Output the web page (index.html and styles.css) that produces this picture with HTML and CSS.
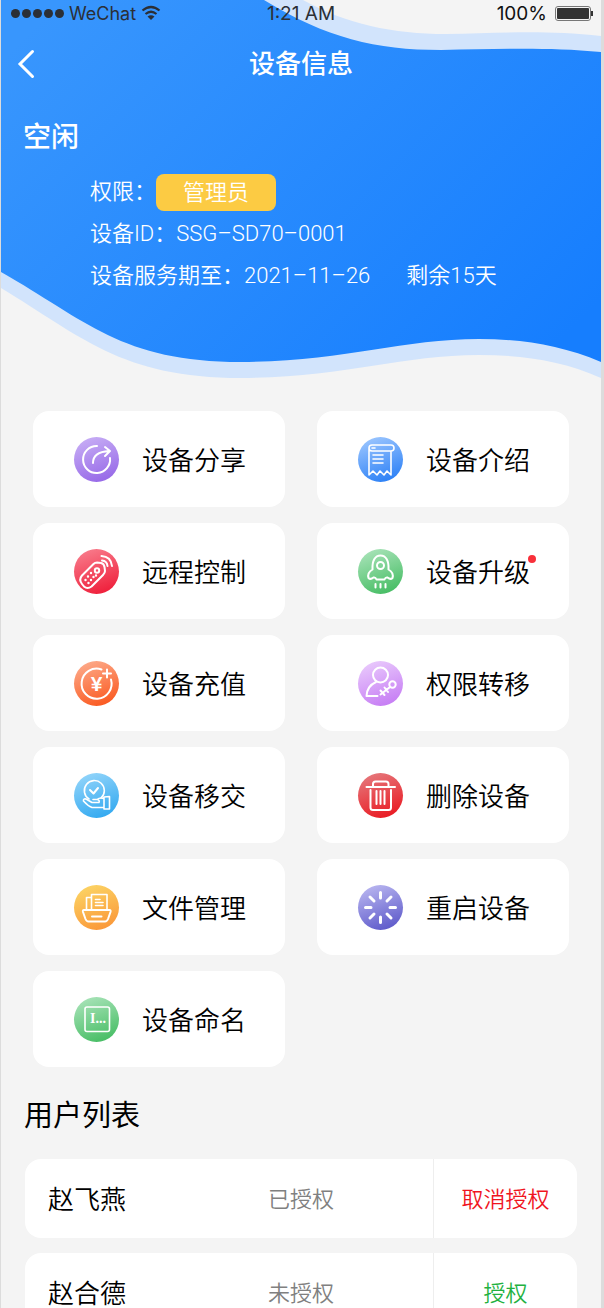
FILE: index.html
```html
<!DOCTYPE html>
<html lang="zh-CN">
<head>
  <meta charset="UTF-8">
  <meta name="viewport" content="width=device-width, initial-scale=1.0">
  <title>设备信息</title>
  <link rel="stylesheet" href="styles.css">
</head>
<body>
  <div class="page">

    <!-- Header with wave background -->
    <header class="hero">
      <svg class="waves" viewBox="0 0 600 380" preserveAspectRatio="none" aria-hidden="true">
        <defs>
          <linearGradient id="sky" gradientUnits="userSpaceOnUse" x1="60" y1="0" x2="480" y2="420">
            <stop offset="0" stop-color="#3896fd"/>
            <stop offset="1" stop-color="#167efe"/>
          </linearGradient>
        </defs>
        <path fill="#d2e4fc" d="M0 0H302C345 24 392 34 445 34C500 33 545 30 600 36V378C560 360 520 355 478 355C400 355 340 378 240 378C120 378 80 336 0 288Z"/>
        <path fill="url(#sky)" d="M0 0H263C325 38 375 50 440 50C500 49 545 47 600 52V362C560 345 520 339 478 339C400 339 340 362 240 362C120 362 85 320 0 272Z"/>
      </svg>

      <div class="status-bar">
        <div class="carrier">
          <span class="signal"><i></i><i></i><i></i><i></i><i></i></span>
          <span>WeChat</span>
          <svg class="wifi" viewBox="0 0 20 16" aria-hidden="true">
            <path d="M1.500 5.500Q10 -1.500 18.500 5.500M4.500 9Q10 4.500 15.500 9" fill="none" stroke="#2b2f36" stroke-width="2.200"/>
            <path d="M6.500 11.500Q10 9 13.500 11.500L10 15Z" fill="#2b2f36"/>
          </svg>
        </div>
        <span class="clock">1:21 AM</span>
        <div class="power">
          <span>100%</span>
          <span class="battery"></span>
        </div>
      </div>

      <nav class="title-bar">
        <button class="back" type="button" aria-label="返回">
          <svg viewBox="0 0 18 30" aria-hidden="true"><path d="M15.500 2.500L3 15L15.500 27.500" fill="none" stroke="#fff" stroke-width="3" stroke-linecap="round"/></svg>
        </button>
        <h1>设备信息</h1>
      </nav>

      <h2 class="state">空闲</h2>
      <div class="info">
        <p>权限：<span class="role">管理员</span></p>
        <p>设备ID：SSG–SD70–0001</p>
        <p>设备服务期至：2021–11–26 <span class="remain">剩余15天</span></p>
      </div>
    </header>

    <!-- Device actions -->
    <main>
      <div class="menu">
        <button class="card" type="button">
          <span class="icon share"><svg viewBox="0 0 45 45">
            <path d="M23 9A13.500 13.500 0 1 0 36 21M19 26Q19 15 35 14M31 10L36 14L31 19"/>
          </svg></span>
          <span class="label">设备分享</span>
        </button>
        <button class="card" type="button">
          <span class="icon intro"><svg viewBox="0 0 45 45">
            <path class="thin" d="M14 8H33Q36 8 36 11T33 14H14Q11 14 11 11T14 8M11 11V38L15 34L19 38L22 34L26 38L29 34L33 38V14M14 11H17M15 18H25M15 22H25M15 26H25"/>
          </svg></span>
          <span class="label">设备介绍</span>
        </button>
        <button class="card" type="button">
          <span class="icon remote"><svg viewBox="0 0 45 45">
            <path d="M8 26.500L19.500 15Q21 13.500 23 13.500L27 14Q30 14.500 30.500 18L31 22Q31 24 29 26L17.500 37.500Q13.500 40.500 10 37.500L8 35Q4.500 30.500 8 26.500ZM28 11.500Q33 12 33.500 17M27.500 7Q37 7.500 38 17"/>
            <circle cx="23" cy="21.500" r="2.200"/>
            <path class="dots" d="M17 24h0M14 27.500h0M19.500 28h0M17 31h0M11.500 31h0M22 26.500h0M14.500 34h0"/>
          </svg></span>
          <span class="label">远程控制</span>
        </button>
        <button class="card" type="button">
          <span class="icon upgrade"><svg viewBox="0 0 45 45">
            <path d="M22.500 6.500C17 6.500 14 12 14.500 20.500C11 22.500 9.500 25.500 10.500 29Q12.500 31 15.500 28.500Q17.500 28 18.500 30.500H26.500Q27.500 28 29.500 28.500Q32.500 31 34.500 29C35.500 25.500 34 22.500 30.500 20.500C31 12 28 6.500 22.500 6.500ZM17.500 35V38.500M22.500 35V38.500M27.500 35V38.500"/>
            <circle cx="22.500" cy="16.500" r="3.500"/>
          </svg></span>
          <span class="label">设备升级<i class="dot"></i></span>
        </button>
        <button class="card" type="button">
          <span class="icon recharge"><svg viewBox="0 0 45 45">
            <path d="M27.500 8.500A15 15 0 1 0 37 18.500M33 8.500V16.500M29 12.500H37"/>
            <text class="yen" x="22.500" y="30" text-anchor="middle">¥</text>
          </svg></span>
          <span class="label">设备充值</span>
        </button>
        <button class="card" type="button">
          <span class="icon transfer"><svg viewBox="0 0 45 45">
            <circle cx="22.500" cy="14" r="7.500"/>
            <path d="M18 21Q9 25 8.500 35H19.500M32 26L22.500 33.500M22.500 29.500L26.500 34M26.500 26.500L30 31"/>
            <circle cx="34.500" cy="23.500" r="3.200"/>
          </svg></span>
          <span class="label">权限转移</span>
        </button>
        <button class="card" type="button">
          <span class="icon handover"><svg viewBox="0 0 45 45">
            <path class="thin" d="M15 26A10 10 0 1 1 27 25"/>
            <path d="M16 17L19.500 20.500L24 15"/>
            <path class="thin" d="M30 34.500H18Q14 33 9.500 28Q9 25.500 12 26L18 29.500H25Q26 27 23 26.500H19M23 26.500Q26 24 30 25.500M30 24L35.500 23.500V36H30Z"/>
          </svg></span>
          <span class="label">设备移交</span>
        </button>
        <button class="card" type="button">
          <span class="icon delete"><svg viewBox="0 0 45 45">
            <path d="M8.500 14H37M15 13.500V11Q15 8.500 17.500 8.500H28Q30.500 8.500 30.500 11V13.500M12.500 17V34.500Q12.500 37 15 37H30.500Q33 37 33 34.500V17M18.500 18V31M22.500 18V31M26.500 18V31"/>
          </svg></span>
          <span class="label">删除设备</span>
        </button>
        <button class="card" type="button">
          <span class="icon files"><svg viewBox="0 0 45 45">
            <path class="thin" d="M17.500 24V9.500H33V24M17.500 12.500H12.500V24M21.500 14.500H26M21.500 17.500H29M21.500 20.500H29"/>
            <path d="M10 25H35.500Q37 25 36.500 27L34 34Q33 36.500 31 36.500H14.500Q12.500 36.500 11.500 34L9 27Q8.500 25 10 25ZM18 31.500H27.500"/>
          </svg></span>
          <span class="label">文件管理</span>
        </button>
        <button class="card" type="button">
          <span class="icon restart"><svg viewBox="0 0 45 45">
            <path class="spokes" d="M22.500 7.500V13M22.500 32V37.500M7.500 22.500H13M32 22.500H37.500M12 12L16 16M29 29L33 33M33 12L29 16M16 29L12 33"/>
          </svg></span>
          <span class="label">重启设备</span>
        </button>
        <button class="card" type="button">
          <span class="icon rename"><svg viewBox="0 0 45 45">
            <rect class="thin" x="11" y="10" width="24.500" height="24.500" rx="2"/>
            <text class="caret" x="16" y="26">I...</text>
          </svg></span>
          <span class="label">设备命名</span>
        </button>
      </div>

      <!-- User list -->
      <h2 class="list-title">用户列表</h2>
      <ul class="users">
        <li>
          <span class="name">赵飞燕</span>
          <span class="auth">已授权</span>
          <button class="revoke" type="button">取消授权</button>
        </li>
        <li>
          <span class="name">赵合德</span>
          <span class="auth">未授权</span>
          <button class="grant" type="button">授权</button>
        </li>
      </ul>
    </main>
  </div>
</body>
</html>
```
FILE: styles.css
```css
* {
  box-sizing: border-box;
}

body {
  margin: 0;
  background-color: #f4f4f4;
  font-family: Roboto, "Noto Sans CJK SC", sans-serif;
  font-weight: 350;
  color: #000;
}

h1, h2, p, ul {
  margin: 0;
  padding: 0;
}

button {
  border: none;
  background: none;
  padding: 0;
  font: inherit;
  color: inherit;
  cursor: pointer;
}

.page {
  height: 100vh;
  overflow: hidden;
  border-left: 1px solid #dcdcdc;
  border-right: 3px solid #dcdcdc;
}

/* Header */
.hero {
  position: relative;
  height: 380px;
  color: #fff;
}

.waves {
  position: absolute;
  inset: 0;
  z-index: -1;
  width: 100%;
  height: 100%;
}

.status-bar {
  display: grid;
  grid-template-columns: 1fr auto 1fr;
  align-items: center;
  height: 26px;
  padding: 0 10px;
  font-family: Inter, sans-serif;
  font-size: 19px;
  font-weight: 400;
  color: #2b2f36;
}

.carrier, .power {
  display: flex;
  align-items: center;
  gap: 5px;
}

.carrier {
  font-size: 18px;
}

.power {
  justify-content: flex-end;
  gap: 8px;
  color: #111;
}

.signal {
  display: flex;
  gap: 2px;
}

.signal i {
  width: 9px;
  height: 9px;
  border-radius: 50%;
  background-color: #2b2f36;
}

.wifi {
  width: 20px;
  height: 16px;
}

.battery {
  position: relative;
  width: 36px;
  height: 15px;
  padding: 1px;
  border: 1px solid #777;
  border-radius: 3px;
  background: #333 content-box;
}

.battery::after {
  content: "";
  position: absolute;
  right: -3px;
  top: 4px;
  width: 2px;
  height: 5px;
  background-color: #333;
}

.title-bar {
  display: grid;
  grid-template-columns: 1fr auto 1fr;
  align-items: center;
  height: 76px;
  padding: 0 16px;
}

.back {
  width: 18px;
  height: 30px;
}

.back svg {
  display: block;
  width: 18px;
  height: 30px;
}

.title-bar h1 {
  font-size: 26px;
  line-height: 36px;
  font-weight: 500;
}

.state {
  padding: 16px 22px 0;
  font-size: 28px;
  line-height: 40px;
  font-weight: 500;
}

.info {
  padding: 13px 0 0 89px;
  font-size: 22px;
  line-height: 42px;
}

.info p {
  display: flex;
  align-items: center;
  white-space: nowrap;
}

.role {
  width: 120px;
  border-radius: 8px;
  background-color: #fccb43;
  line-height: 37px;
  text-align: center;
}

.remain {
  margin-left: 36px;
}

/* Action cards */
.menu {
  display: grid;
  grid-template-columns: 1fr 1fr;
  gap: 16px 32px;
  padding: 31px 32px 0;
}

.card {
  display: flex;
  align-items: center;
  gap: 23px;
  height: 96px;
  padding-left: 41px;
  border-radius: 16px;
  background-color: #fff;
  font-size: 26px;
  line-height: 36px;
}

.label {
  position: relative;
  padding-top: 4px;
}

.dot {
  position: absolute;
  top: 4px;
  right: -6px;
  width: 8px;
  height: 8px;
  border-radius: 50%;
  background-color: #f8303a;
}

.icon {
  width: 45px;
  height: 45px;
  border-radius: 50%;
}

.icon svg {
  display: block;
  fill: none;
  stroke: #fff;
  stroke-width: 2;
  stroke-linecap: round;
  stroke-linejoin: round;
}

.icon .thin {
  stroke-width: 1.6;
}

.icon .dots {
  stroke-width: 2.4;
}

.icon .spokes {
  stroke-width: 3;
}

.icon text {
  fill: #fff;
  stroke: none;
}

.yen {
  font: bold 21px "Liberation Sans", sans-serif;
}

.caret {
  font: bold 14px "Liberation Serif", serif;
}

.share { background: linear-gradient(160deg, #cbb3f6, #9161e6); }
.intro { background: linear-gradient(160deg, #a4cbff, #2079f5); }
.remote { background: linear-gradient(160deg, #f98392, #ee1431); }
.upgrade { background: linear-gradient(160deg, #b0e6bf, #3cb95b); }
.recharge { background: linear-gradient(160deg, #fdb193, #fa5014); }
.transfer { background: linear-gradient(160deg, #ecd0fd, #c274f3); }
.handover { background: linear-gradient(160deg, #9ad8fb, #28a4ef); }
.delete { background: linear-gradient(160deg, #e57f83, #ea1018); }
.files { background: linear-gradient(160deg, #fcd968, #fa9134); }
.restart { background: linear-gradient(160deg, #c0bdf3, #5450c6); }
.rename { background: linear-gradient(160deg, #b0e6bf, #3cb95b); }

/* User list */
.list-title {
  padding: 29px 23px 23px;
  font-size: 29px;
  line-height: 40px;
  font-weight: 400;
}

.users {
  display: grid;
  gap: 15px;
  padding: 0 24px;
  list-style: none;
}

.users li {
  display: grid;
  grid-template-columns: 144px 1fr 144px;
  align-items: center;
  height: 79px;
  border-radius: 16px;
  background-color: #fff;
  font-size: 22px;
  line-height: 36px;
}

.name {
  padding: 2px 0 0 23px;
  font-size: 26px;
}

.auth {
  padding-top: 2px;
  text-align: center;
  color: #808080;
}

.users button {
  height: 100%;
  padding-top: 3px;
  border-left: 1px solid #eee;
}

.revoke {
  color: #f0141e;
}

.grant {
  color: #22b140;
}
```
